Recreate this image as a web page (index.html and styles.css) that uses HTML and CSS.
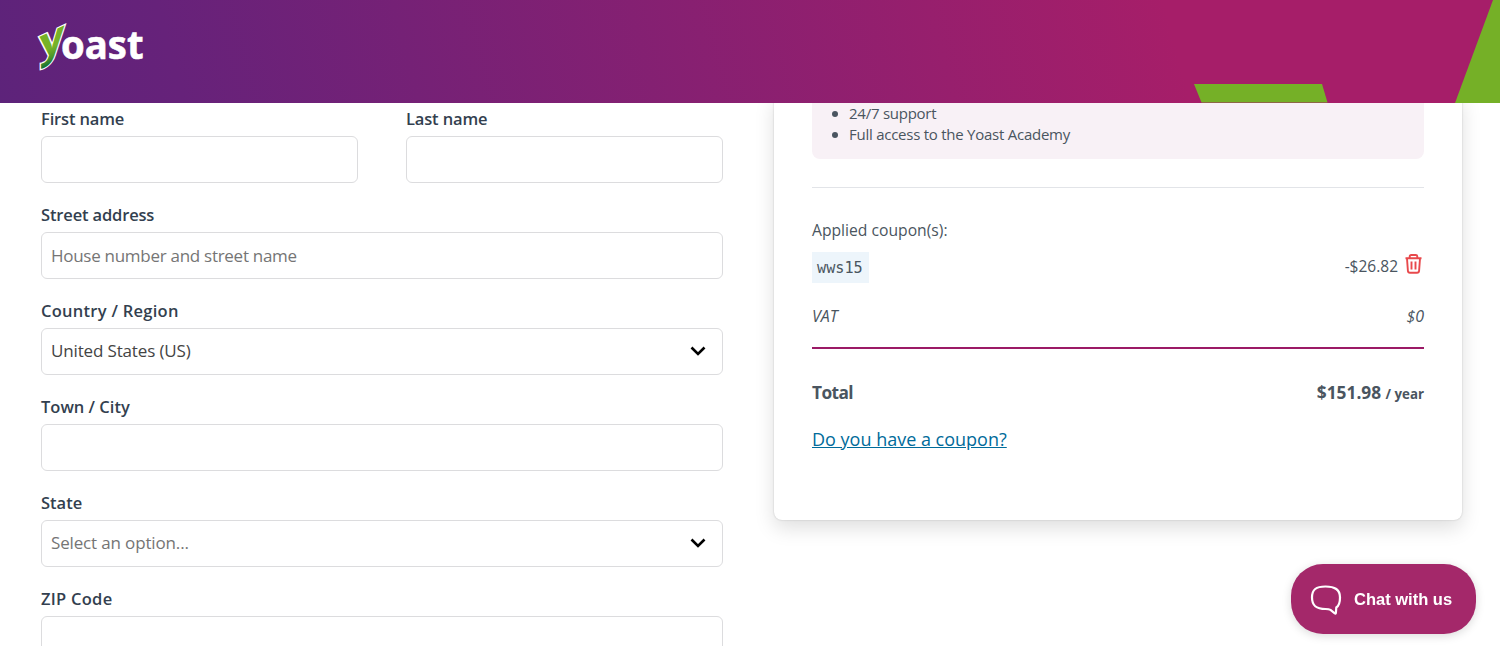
FILE: index.html
```html
<!DOCTYPE html>
<html lang="en">
<head>
<meta charset="UTF-8">
<meta name="viewport" content="width=device-width, initial-scale=1.0">
<title>Checkout - Yoast</title>
<link rel="stylesheet" href="styles.css">
</head>
<body>

<header class="header">
    <svg class="logo" width="110" height="50" viewBox="0 0 110 50">
        <defs>
            <linearGradient id="leaf" gradientUnits="userSpaceOnUse" x1="0" y1="14" x2="0" y2="54">
                <stop offset="0.4" stop-color="#77b227"/>
                <stop offset="0.65" stop-color="#4a942c"/>
                <stop offset="0.85" stop-color="#0b6b33"/>
            </linearGradient>
        </defs>
        <text class="logo-text" x="24" y="36" textLength="82.500" lengthAdjust="spacingAndGlyphs">oast</text>
        <text class="logo-y" x="2.500" y="37" textLength="25" lengthAdjust="spacingAndGlyphs" transform="matrix(1 -0.46 0 1 0 1)" fill="url(#leaf)">y</text>
    </svg>
    <svg class="shapes" width="310" height="103" viewBox="0 0 310 103">
        <polygon points="4,84 132,84 137.500,102.500 11.500,102.500" fill="#75b027"/>
        <polygon points="303,0 310,0 310,103 265,103" fill="#75b027"/>
    </svg>
</header>

<main class="checkout">
    <form class="billing">
        <div class="row">
            <div class="field">
                <label class="name" for="first">First name</label>
                <input type="text" id="first">
            </div>
            <div class="field">
                <label class="name" for="last">Last name</label>
                <input type="text" id="last">
            </div>
        </div>
        <div class="field">
            <label class="name" for="street">Street address</label>
            <input type="text" id="street" placeholder="House number and street name">
        </div>
        <div class="field">
            <label class="wide">Country / Region</label>
            <div class="select">
                <span>United States (US)</span>
                <svg width="16" height="10" viewBox="0 0 16 10"><path d="M1.500 1.500 8 8l6.500-6.500"/></svg>
            </div>
        </div>
        <div class="field">
            <label for="city">Town / City</label>
            <input type="text" id="city">
        </div>
        <div class="field">
            <label>State</label>
            <div class="select empty">
                <span>Select an option...</span>
                <svg width="16" height="10" viewBox="0 0 16 10"><path d="M1.500 1.500 8 8l6.500-6.500"/></svg>
            </div>
        </div>
        <div class="field">
            <label class="wide" for="zip">ZIP Code</label>
            <input type="text" id="zip">
        </div>
    </form>

    <aside class="summary">
        <ul class="features">
            <li>24/7 support</li>
            <li>Full access to the Yoast Academy</li>
        </ul>
        <div class="coupons">
            <p class="applied">Applied coupon(s):</p>
            <div class="line coupon-line">
                <code>wws15</code>
                <span class="discount">
                    <span>-$26.82</span>
                    <svg width="17" height="20" viewBox="0 0 17 20">
                        <path d="M.5 4.200h16M4.700 4V2.500q0-1.500 1.500-1.500h4.600q1.500 0 1.500 1.500V4M2 4.500l.9 12.300q.1 2 2.100 2h7q2 0 2.100-2L15 4.500M6.500 7.500v8M10.500 7.500v8"/>
                    </svg>
                </span>
            </div>
        </div>
        <div class="line vat"><span>VAT</span><span>$0</span></div>
        <div class="line total">
            <span class="total-label">Total</span>
            <span class="price">$151.98 <small>/ year</small></span>
        </div>
        <a class="coupon-link" href="#">Do you have a coupon?</a>
    </aside>
</main>

<button class="chat">
    <svg width="32" height="30" viewBox="0 0 32 30">
        <path d="M15.500 1.500C6 1.500 2 4.500 2 12.500s4 11.500 13.500 11.500c2.500 0 3.800.2 5 .9l4.300 3.400c.7.500 1.100.2 1.100-.6l.4-5.200c2.700-1.700 3.700-5 3.700-10 0-8-5-11-14.500-11z"/>
    </svg>
    <span>Chat with us</span>
</button>

</body>
</html>
```
FILE: styles.css
```css
* {
    box-sizing: border-box;
}
body {
    margin: 0;
    height: 646px;
    overflow: hidden;
    display: flex;
    flex-direction: column;
    font-family: "Open Sans", "Noto Sans", sans-serif;
    color: #4a5560;
    background: #fff;
}
.header {
    display: flex;
    justify-content: space-between;
    flex: none;
    height: 103px;
    padding-left: 37px;
    background: linear-gradient(75deg, #5d237a 0%, #66227a 12%, #a61e69 78%);
}
.logo {
    margin-top: 23px;
    overflow: visible;
}
.logo-text {
    font-size: 40px;
    font-weight: 700;
    fill: #fff;
    stroke: #fff;
    stroke-width: 0.6px;
}
.logo-y {
    font-size: 42px;
    font-weight: 700;
    stroke: #fff;
    stroke-width: 2.6px;
    paint-order: stroke;
}
.checkout {
    flex: 1;
    min-height: 0;
    overflow: hidden;
    display: flex;
    align-items: flex-start;
    gap: 51px;
    padding: 0 38px 0 41px;
}
.billing {
    width: 682px;
    padding-top: 4px;
}
.row {
    display: grid;
    grid-template-columns: 317px 317px;
    gap: 48px;
}
.field {
    display: flex;
    flex-direction: column;
    gap: 5px;
    margin-bottom: 20px;
}
label {
    height: 24px;
    font-size: 16.5px;
    line-height: 24px;
    font-weight: 600;
    color: #333f4f;
}
label.name {
    letter-spacing: -0.15px;
}
label.wide {
    letter-spacing: 0.27px;
}
input, .select {
    width: 100%;
    height: 47px;
    padding: 0 9px;
    border: 1px solid #dcdcde;
    border-radius: 6px;
    background: #fff;
    font-family: inherit;
    font-size: 17px;
    letter-spacing: -0.28px;
    color: #444;
}
input::placeholder, .empty {
    color: #757575;
}
.select {
    display: flex;
    align-items: center;
    justify-content: space-between;
    padding: 0 16px 2px 9px;
    letter-spacing: -0.15px;
}
.select svg {
    fill: none;
    stroke: #000;
    stroke-width: 2.6px;
}
.summary {
    flex: 1;
    height: 427px;
    margin-top: -10px;
    padding: 0 38px;
    border-radius: 8px;
    background: #fff;
    box-shadow: 0 0 2px rgba(0,0,0,0.2), 0 8px 20px rgba(0,0,0,0.13);
}
.features {
    margin: 0;
    padding: 10px 0 14px 20px;
    border-radius: 0 0 8px 8px;
    background: #f8f1f6;
    list-style: none;
    font-size: 15px;
    line-height: 21px;
    letter-spacing: -0.25px;
}
.features li {
    display: flex;
    align-items: center;
    gap: 11px;
    height: 21px;
}
.features li::before {
    content: "";
    width: 6px;
    height: 6px;
    border-radius: 50%;
    background: #4a5560;
}
.coupons {
    margin-top: 28px;
    padding-top: 32px;
    border-top: 1px solid #e2e4e8;
}
.applied {
    margin: 0 0 11px;
    font-size: 15.7px;
    line-height: 21px;
}
.line {
    display: flex;
    align-items: center;
    justify-content: space-between;
}
.coupon-line {
    height: 31px;
}
code {
    height: 31px;
    padding: 0 6px 0 5px;
    background: #edf5fb;
    font-family: "DejaVu Sans Mono", monospace;
    font-size: 15.2px;
    line-height: 32px;
}
.discount {
    display: flex;
    gap: 7px;
    padding: 0 2px 4px 0;
    font-size: 15.5px;
}
.discount svg {
    margin-top: -1px;
    fill: none;
    stroke: #e8494c;
    stroke-width: 1.9px;
}
.vat {
    height: 66px;
    padding-top: 2px;
    border-bottom: 2px solid #9b1a66;
    font-size: 16px;
    font-style: italic;
}
.total {
    margin-top: 30px;
    height: 26px;
    font-size: 17.3px;
    font-weight: 700;
}
.total-label {
    letter-spacing: -0.6px;
}
.total small {
    font-size: 13.3px;
}
.coupon-link {
    display: inline-block;
    margin-top: 21px;
    font-size: 18px;
    line-height: 26px;
    color: #006b9a;
}
.chat {
    position: fixed;
    right: 24px;
    bottom: 12px;
    width: 185px;
    height: 70px;
    display: flex;
    align-items: center;
    gap: 12px;
    padding: 1px 0 0 19px;
    border: none;
    border-radius: 32px;
    background: #a4286a;
    box-shadow: 0 2px 10px rgba(0,0,0,0.15);
    color: #fff;
    font-family: "Liberation Sans", Arial, sans-serif;
    font-size: 16.5px;
    font-weight: 700;
}
.chat svg {
    fill: none;
    stroke: #fff;
    stroke-width: 2.2px;
}
```
